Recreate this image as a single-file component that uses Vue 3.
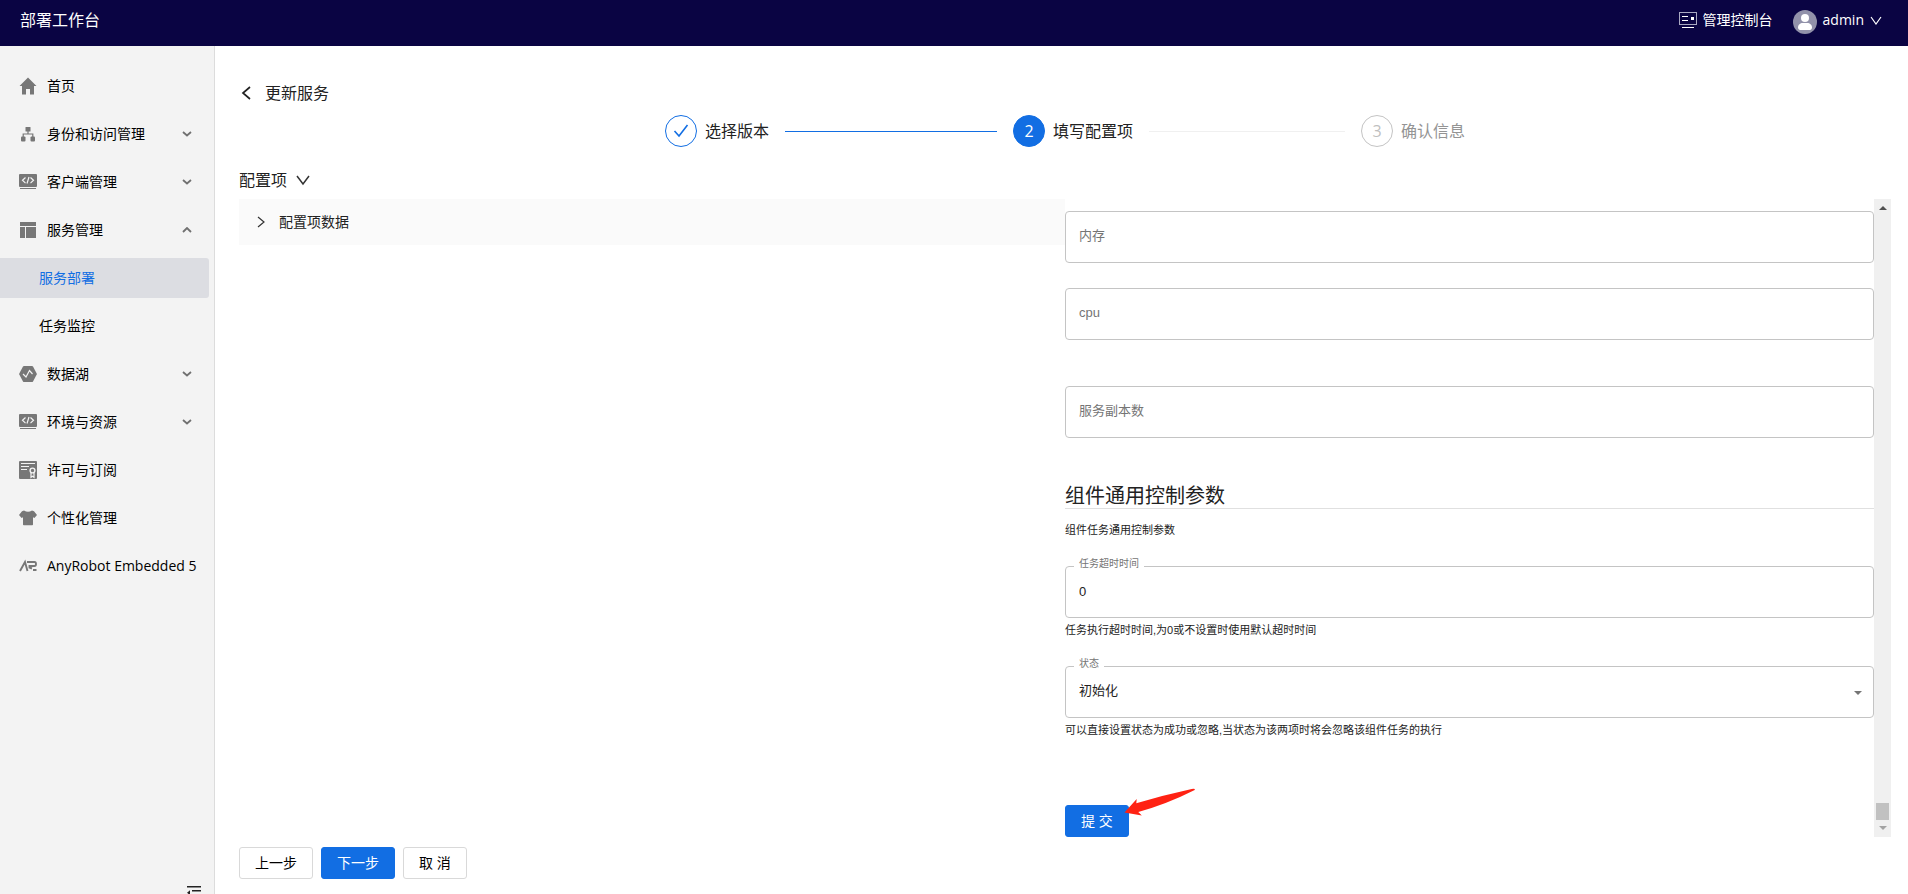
<script setup>
import { ref } from 'vue'

const menu = [
  { label: '首页', icon: 'home' },
  { label: '身份和访问管理', icon: 'org', arrow: 'down' },
  { label: '客户端管理', icon: 'code', arrow: 'down' },
  { label: '服务管理', icon: 'layout', arrow: 'up' },
  { label: '服务部署', child: true, active: true },
  { label: '任务监控', child: true },
  { label: '数据湖', icon: 'lake', arrow: 'down' },
  { label: '环境与资源', icon: 'code', arrow: 'down' },
  { label: '许可与订阅', icon: 'license' },
  { label: '个性化管理', icon: 'shirt' },
  { label: 'AnyRobot Embedded 5', icon: 'ar' }
]

const memory = ref('')
const cpu = ref('')
const replicas = ref('')
const timeout = ref('0')
const status = ref('初始化')
</script>

<template>
  <div class="app">
    <header class="topbar">
      <span class="brand">部署工作台</span>
      <div class="top-actions">
        <a class="console" href="#">
          <svg width="18" height="16" viewBox="0 0 18 16" fill="none" stroke="#fff">
            <rect x="0.5" y="0.5" width="17" height="12" stroke="#a9a8c2" />
            <path d="M3 4.5h6M3 8.5h6M3 15.5h12" />
            <rect x="12" y="5" width="3" height="3" fill="#fff" stroke="none" />
          </svg>
          管理控制台
        </a>
        <button class="user" type="button">
          <svg class="avatar" width="24" height="24" viewBox="0 0 24 24">
            <circle cx="12" cy="12" r="12" fill="#9292aa" />
            <circle cx="12" cy="8" r="4" fill="#fff" />
            <path d="M5 17.500c0-3 2.500-4.500 4.500-4.500h5c2 0 4.500 1.500 4.500 4.500 0 2-1.500 2.500-3 2.500H8c-1.500 0-3-.5-3-2.500z" fill="#fff" />
          </svg>
          admin
          <svg class="user-arrow" width="12" height="9" viewBox="0 0 12 9" fill="none" stroke="#fff" stroke-width="1.200"><path d="M1 1l5 7 5-7" /></svg>
        </button>
      </div>
    </header>

    <div class="body">
      <nav class="sidebar">
        <a
          v-for="item in menu"
          :key="item.label"
          href="#"
          class="item"
          :class="{ child: item.child, active: item.active }"
        >
          <svg v-if="item.icon" class="icon" width="18" height="18" viewBox="0 0 18 18" fill="#777">
            <path v-if="item.icon === 'home'" d="M9 .5L17.500 9H15v8.500h-4V12H7v5.500H3V9H.5z" />
            <g v-else-if="item.icon === 'org'">
              <rect x="6.500" y="2" width="5" height="4.500" rx=".5" />
              <rect x="2" y="11.500" width="4.500" height="5" rx="1" />
              <rect x="11.500" y="11.500" width="4.500" height="5" rx="1" />
              <path d="M9 6v3M4.200 12V9h9.600v3" fill="none" stroke="#777" stroke-width="1.200" />
            </g>
            <g v-else-if="item.icon === 'code'">
              <rect x="0" y="1" width="18" height="13" rx="1" />
              <rect x="1" y="15" width="16" height="1" />
              <path d="M6.500 4.500L3.500 7.300l3 2.800M11.500 4.500l3 2.800-3 2.800M10 4L8 10.500" fill="none" stroke="#f3f3f3" stroke-width="1.200" />
            </g>
            <path v-else-if="item.icon === 'layout'" d="M1 1h16v4H1zM1 6h5v11H1zM7 6h10v11H7z" />
            <g v-else-if="item.icon === 'lake'">
              <path d="M5 1h8q.6 0 1 .6L17.700 8.400q.3.6 0 1.200L14 16.400q-.4.6-1 .6H5q-.6 0-1-.6L.3 9.600q-.3-.6 0-1.200L4 1.600Q4.400 1 5 1z" />
              <path d="M4 9l3 3 3.500-6.500 3 3.500" fill="none" stroke="#f3f3f3" stroke-width="1.200" />
            </g>
            <g v-else-if="item.icon === 'license'">
              <rect width="18" height="18" rx="1" />
              <path d="M2 2.500h14M2 5.500h8M2 8.500h6" stroke="#f3f3f3" />
              <circle cx="13.500" cy="9.500" r="2.400" fill="none" stroke="#f3f3f3" stroke-width="1.400" />
              <path d="M12 11.500v4.800l1.500-1 1.500 1v-4.800" fill="none" stroke="#f3f3f3" stroke-width="1.200" />
            </g>
            <path v-else-if="item.icon === 'shirt'" d="M5 1.500q4 2.500 8 0l2 .7L18 6l-2.600 3-1.400-.8V15.500q0 .8-.8.800H4.800q-.8 0-.8-.8V8.200L2.600 9 0 6l3-3.800z" />
            <path v-else d="M1 14L6 5l2.500 9M8 5h7.500q1.500 0 1.500 2t-1.500 2H10.500v1.500L13 11.500M13 11.500M14 13h3.500" fill="none" stroke="#777" stroke-width="1.900" />
          </svg>
          <span>{{ item.label }}</span>
          <svg v-if="item.arrow" class="caret" width="10" height="6" viewBox="0 0 10 6" fill="none" stroke="#707070" stroke-width="1.800">
            <path :d="item.arrow === 'up' ? 'M1 5l4-4 4 4' : 'M1 1l4 3.500 4-3.500'" />
          </svg>
        </a>
        <button class="collapse" type="button" aria-label="menu">
          <svg width="14" height="14" viewBox="0 0 14 14" fill="#222"><path d="M0 0h14v1.400H0zM5 4h9v1.400H5zM5 8h9v1.400H5zM0 6.700l3-2.500v5zM0 12h14v1.400H0z" /></svg>
        </button>
      </nav>

      <main class="main">
        <a class="back" href="#">
          <svg width="12" height="14" viewBox="0 0 12 14" fill="none" stroke="#222" stroke-width="1.700"><path d="M9 1L2 7l7 6" /></svg>
          更新服务
        </a>

        <ol class="steps">
          <li class="step done">
            <span class="dot">
              <svg width="16" height="14" viewBox="0 0 16 14" fill="none" stroke="#126ee3" stroke-width="1.600"><path d="M1.500 7l4.500 5L14.500 1" /></svg>
            </span>
            <span>选择版本</span>
            <i class="rail"></i>
          </li>
          <li class="step current">
            <span class="dot">2</span>
            <span>填写配置项</span>
            <i class="rail"></i>
          </li>
          <li class="step">
            <span class="dot">3</span>
            <span>确认信息</span>
          </li>
        </ol>

        <button class="section-title" type="button">
          配置项
          <svg width="14" height="11" viewBox="0 0 14 11" fill="none" stroke="#333" stroke-width="1.500"><path d="M1 1l6 8 6-8" /></svg>
        </button>

        <div class="workspace">
          <div class="tree">
            <button class="tree-head" type="button">
              <svg width="8" height="12" viewBox="0 0 8 12" fill="none" stroke="#333" stroke-width="1.200"><path d="M1 1l6 5-6 5" /></svg>
              配置项数据
            </button>
          </div>

          <form class="form" @submit.prevent>
            <div class="field">
              <input v-model="memory" type="text" placeholder="内存" aria-label="内存" />
            </div>
            <div class="field">
              <input v-model="cpu" type="text" placeholder="cpu" aria-label="cpu" />
            </div>
            <div class="field spaced">
              <input v-model="replicas" type="text" placeholder="服务副本数" aria-label="服务副本数" />
            </div>

            <h2>组件通用控制参数</h2>
            <p class="note intro">组件任务通用控制参数</p>

            <div class="field labelled">
              <label for="timeout">任务超时时间</label>
              <input id="timeout" v-model="timeout" type="text" />
            </div>
            <p class="note">任务执行超时时间,为0或不设置时使用默认超时时间</p>

            <div class="field labelled">
              <label for="status">状态</label>
              <select id="status" v-model="status">
                <option>初始化</option>
                <option>成功</option>
                <option>忽略</option>
              </select>
              <svg class="drop" width="8" height="4" viewBox="0 0 8 4" fill="#757575"><path d="M0 0h8L4 4z" /></svg>
            </div>
            <p class="note">可以直接设置状态为成功或忽略,当状态为该两项时将会忽略该组件任务的执行</p>

            <div class="submit-row">
              <button class="btn primary submit" type="submit">提 交</button>
              <svg class="pointer" width="72" height="28" viewBox="0 0 72 28" fill="#ff2213">
                <path d="M.5 24.500L12.700 11l-.4 4.300Q40 7 67.700 1q4-.6 3 1Q43 16 14.300 24l3.500 3.400z" />
              </svg>
            </div>
          </form>

          <div class="scrollbar" aria-hidden="true">
            <svg width="8" height="4" viewBox="0 0 8 4" fill="#505050"><path d="M0 4h8L4 0z" /></svg>
            <i class="thumb"></i>
            <svg width="8" height="4" viewBox="0 0 8 4" fill="#a3a3a3"><path d="M0 0h8L4 4z" /></svg>
          </div>
        </div>

        <div class="actions">
          <button class="btn" type="button">上一步</button>
          <button class="btn primary" type="button">下一步</button>
          <button class="btn" type="button">取 消</button>
        </div>
      </main>
    </div>
  </div>
</template>

<style>
body {
  margin: 0;
  background: #fff;
}
</style>

<style scoped>
.app {
  display: flex;
  flex-direction: column;
  height: 100vh;
  overflow: hidden;
  font-family: "Open Sans", "Noto Sans CJK SC", sans-serif;
  font-size: 14px;
  line-height: 20px;
  color: #222;
}
.app * {
  box-sizing: border-box;
}
a {
  color: inherit;
  text-decoration: none;
}
button,
input,
select {
  margin: 0;
  padding: 0;
  border: 0;
  background: none;
  font: inherit;
  color: inherit;
}
svg {
  display: block;
  flex: none;
}
.topbar {
  display: flex;
  flex: none;
  justify-content: space-between;
  align-items: center;
  height: 46px;
  padding: 0 26px 6px 20px;
  background: #0a0443;
  color: #fff;
}
.brand {
  font-size: 16px;
}
.top-actions,
.console,
.user {
  display: flex;
  align-items: center;
}
.top-actions {
  gap: 20px;
}
.console {
  gap: 6px;
}
.user {
  gap: 6px;
}
.avatar {
  margin-top: 4px;
}
.body {
  display: flex;
  flex: 1;
  min-height: 0;
}
.sidebar {
  display: flex;
  flex: none;
  flex-direction: column;
  gap: 8px;
  width: 215px;
  padding-top: 20px;
  border-right: 1px solid #dcdcdc;
  background: #f3f3f3;
  color: #000;
}
.item {
  display: flex;
  flex: none;
  align-items: center;
  height: 40px;
  margin-right: 5px;
  padding: 0 17px 0 19px;
  white-space: nowrap;
}
.icon {
  margin-right: 10px;
}
.caret {
  margin-left: auto;
}
.item.child {
  padding-left: 39px;
}
.item.active {
  border-radius: 0 3px 3px 0;
  background: #dcdde2;
  color: #126ee3;
}
.collapse {
  height: 8px;
  margin: auto 13px 0 auto;
  overflow: hidden;
}
.main {
  display: flex;
  flex: 1;
  flex-direction: column;
  min-width: 0;
  padding: 35px 17px 15px 24px;
}
.back {
  display: flex;
  align-items: center;
  align-self: flex-start;
  gap: 12px;
  padding-left: 2px;
  font-size: 16px;
  line-height: 24px;
}
.steps {
  display: flex;
  gap: 16px;
  width: 100%;
  max-width: 800px;
  margin: 10px auto 21px;
  padding: 0;
  list-style: none;
  font-size: 16px;
}
.step {
  display: flex;
  align-items: center;
  gap: 8px;
  color: #949494;
  white-space: nowrap;
}
.step:not(:last-child) {
  flex: 1;
}
.step.done,
.step.current {
  color: #222;
}
.dot {
  display: flex;
  flex: none;
  justify-content: center;
  align-items: center;
  width: 32px;
  height: 32px;
  border: 1px solid #c4c4c4;
  border-radius: 50%;
  color: #bfbfbf;
}
.done .dot {
  border-color: #126ee3;
}
.current .dot {
  border-color: #126ee3;
  background: #126ee3;
  color: #fff;
}
.rail {
  flex: 1;
  height: 1px;
  margin-left: 8px;
  background: #f0f0f0;
}
.done .rail {
  background: #126ee3;
}
.section-title {
  display: flex;
  align-items: center;
  align-self: flex-start;
  gap: 9px;
  margin-bottom: 7px;
  font-size: 16px;
  line-height: 24px;
}
.workspace {
  display: flex;
  flex: 1;
  min-height: 0;
}
.tree,
.form {
  min-width: 0;
}
.tree {
  width: 50%;
}
.tree-head {
  display: flex;
  align-items: center;
  gap: 14px;
  width: 100%;
  height: 46px;
  padding-left: 18px;
  background: #fafafa;
}
.form {
  flex: 1;
  padding-top: 12px;
}
.field {
  position: relative;
  height: 52px;
  border: 1px solid #c4c4c4;
  border-radius: 4px;
  font-family: "Liberation Sans", "Noto Sans CJK SC", sans-serif;
  font-size: 13px;
}
.field + .field {
  margin-top: 25px;
}
.field + .field.spaced {
  margin-top: 46px;
}
.field input,
.field select {
  display: block;
  width: 100%;
  height: 100%;
  padding: 0 13px 4px;
  outline: 0;
  appearance: none;
}
.field.labelled input,
.field.labelled select {
  padding-bottom: 2px;
}
.field input::placeholder {
  color: #757575;
  opacity: 1;
}
.field label {
  position: absolute;
  top: -10px;
  left: 8px;
  padding: 0 5px;
  background: #fff;
  color: #757575;
  font-size: 10px;
  line-height: 14px;
}
.drop {
  position: absolute;
  top: 24px;
  right: 11px;
  pointer-events: none;
}
h2 {
  margin: 46px 0 0;
  border-bottom: 1px solid #e0e0e0;
  font-size: 20px;
  font-weight: 400;
  line-height: 24px;
}
.note {
  margin: 3px 0 27px;
  font-family: "Liberation Sans", "Noto Sans CJK SC", sans-serif;
  font-size: 11px;
  line-height: 18px;
}
.note.intro {
  margin-top: 12px;
}
.submit-row {
  position: relative;
  display: flex;
  margin-top: 66px;
}
.pointer {
  position: absolute;
  top: -17px;
  left: 59px;
}
.btn {
  height: 32px;
  padding: 0 15px;
  border: 1px solid #d9d9d9;
  border-radius: 3px;
  background: #fff;
  color: #000;
}
.btn.primary {
  border-color: #126ee3;
  background: #126ee3;
  color: #fff;
}
.scrollbar {
  display: flex;
  flex: none;
  flex-direction: column;
  align-items: center;
  width: 17px;
  padding: 7px 0;
  background: #f0f0f0;
}
.thumb {
  width: 13px;
  height: 17px;
  margin: auto 0 6px;
  background: #c1c1c1;
}
.actions {
  display: flex;
  gap: 8px;
  margin-top: 10px;
}
</style>
